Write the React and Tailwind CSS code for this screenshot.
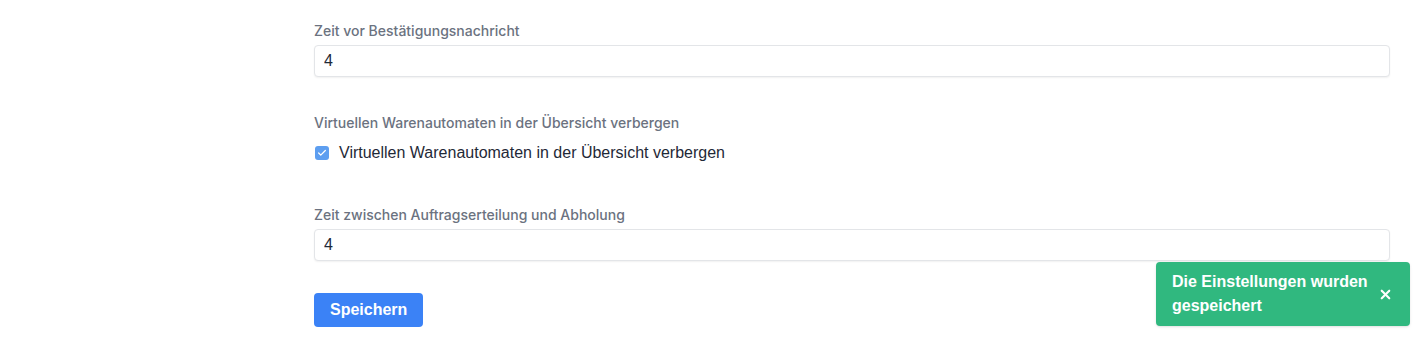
import { useState } from 'react';
import { X, Check } from 'lucide-react';

function Field({ label, value }) {
  return (
    <div className="flex flex-col">
      <label className="mb-[6px] font-['Inter',sans-serif] text-[14px] font-medium leading-[16px] text-[#6b7280]">
        {label}
      </label>
      <input
        defaultValue={value}
        className="h-[32px] w-full rounded-[4px] border border-[#e3e5e8] bg-white px-[9px] text-[16px] text-[#1f2937] shadow-[0_1px_2px_rgba(0,0,0,0.06)] outline-none"
      />
    </div>
  );
}

export default function App() {
  const [hidden, setHidden] = useState(true);
  const [toast, setToast] = useState(true);

  return (
    <div className="relative h-[351px] w-full bg-white font-['Liberation_Sans',Arial,sans-serif]">
      <div className="ml-[314px] mr-[33px] pt-[23px] flex flex-col">
        <Field label="Zeit vor Bestätigungsnachricht" value="4" />

        {/* Checkbox */}
        <div className="mt-[38px] flex flex-col">
          <span className="font-['Inter',sans-serif] text-[14px] font-medium leading-[16px] text-[#6b7280]">
            Virtuellen Warenautomaten in der Übersicht verbergen
          </span>
          <label className="mt-[12px] flex items-center gap-[10px] cursor-pointer">
            <button
              type="button"
              onClick={() => setHidden(!hidden)}
              className={`ml-[1px] flex h-[14px] w-[14px] items-center justify-center rounded-[3px] ${hidden ? 'bg-[#5d9ef0]' : 'border border-gray-300 bg-white'}`}
            >
              {hidden && <Check className="h-[10px] w-[10px] text-white" strokeWidth={3} />}
            </button>
            <span className="text-[16px] leading-[20px] text-[#1f2937]">
              Virtuellen Warenautomaten in der Übersicht verbergen
            </span>
          </label>
        </div>

        <div className="mt-[44px]">
          <Field label="Zeit zwischen Auftragserteilung und Abholung" value="4" />
        </div>

        <div className="mt-[32px]">
          <button className="h-[34px] rounded-[4px] bg-[#3b82f6] px-[16px] text-[16px] font-bold text-white">
            Speichern
          </button>
        </div>
      </div>

      {/* Toast */}
      {toast && (
        <div className="absolute right-[13px] bottom-[25px] flex h-[64px] w-[254px] items-center justify-between rounded-[4px] bg-[#30b87f] pl-[16px] pr-[17px] text-white shadow-sm">
          <p className="text-[16px] font-bold leading-[24px]">
            Die Einstellungen wurden
            <br />
            gespeichert
          </p>
          <button onClick={() => setToast(false)} className="text-white">
            <X className="h-[15px] w-[15px]" strokeWidth={3.5} />
          </button>
        </div>
      )}
    </div>
  );
}
